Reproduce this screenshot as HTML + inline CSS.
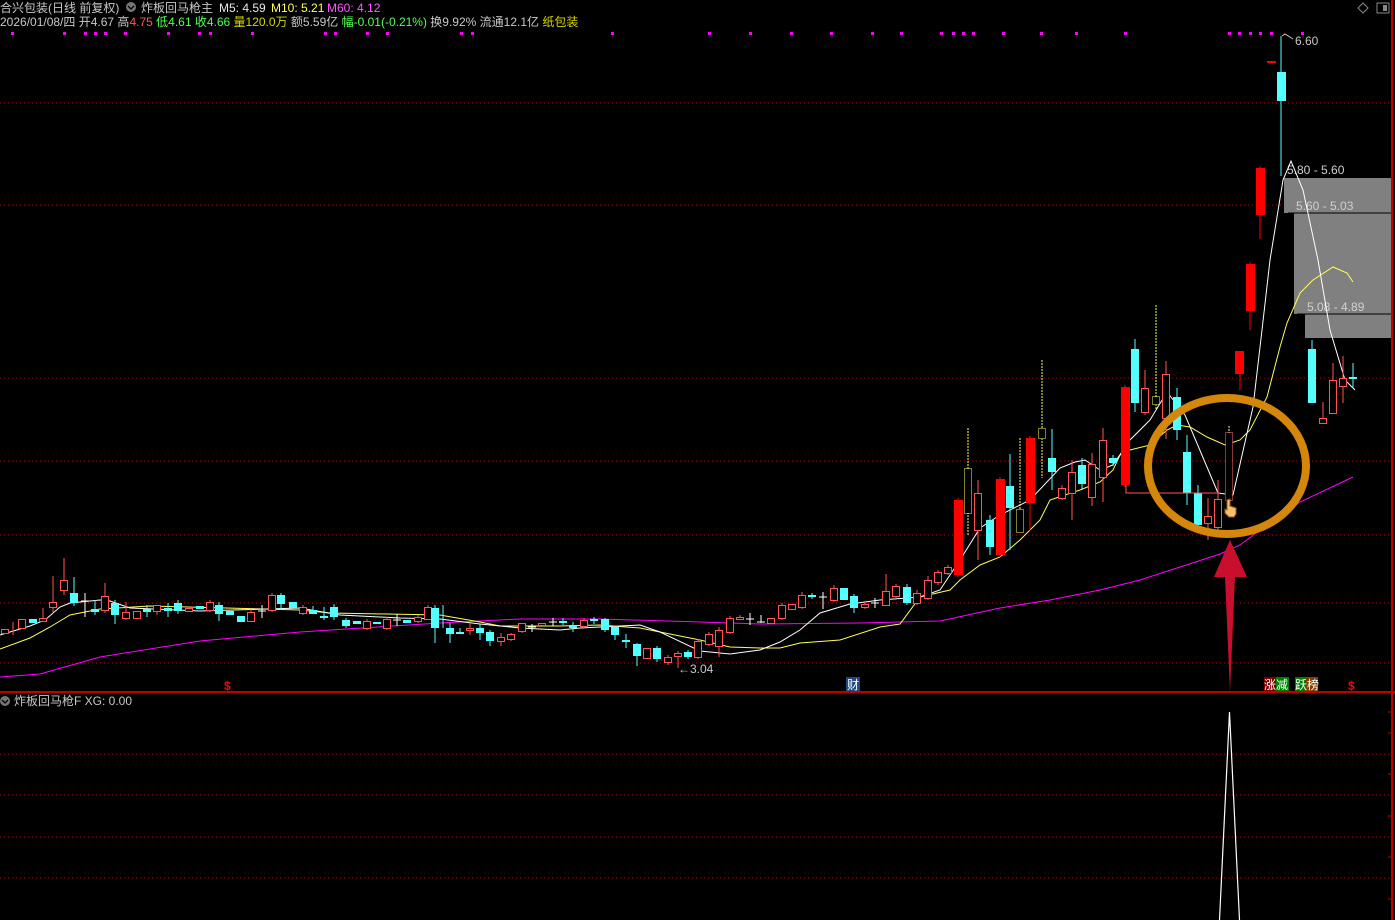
<!DOCTYPE html>
<html><head><meta charset="utf-8">
<style>
html,body{margin:0;padding:0;background:#000;width:1395px;height:920px;overflow:hidden}
svg{display:block}
text{font-family:"Liberation Sans","Noto Sans CJK SC",sans-serif;font-size:12px}
.r{fill:#000;stroke:#ff5454;stroke-width:1}
.R{fill:#ff0000}
.c{fill:#54ffff}
.y{fill:#000;stroke:#ffff54;stroke-width:1;stroke-dasharray:1 1}
.g{stroke:#c00000;stroke-width:1;stroke-dasharray:1 3}
</style></head><body>
<svg width="1395" height="920" viewBox="0 0 1395 920" xmlns="http://www.w3.org/2000/svg">
<!-- header -->
<text x="0" y="12" fill="#c8c8c8">合兴包装(日线 前复权)</text>
<circle cx="131" cy="7" r="5" fill="#777"/><path d="M128 6 L131 9 L134 6" stroke="#000" fill="none" stroke-width="1.3"/>
<text x="141" y="12" fill="#c8c8c8">炸板回马枪主</text>
<text x="219" y="12" fill="#e8e8e8">M5: 4.59</text>
<text x="271" y="12" fill="#ffff54">M10: 5.21</text>
<text x="327" y="12" fill="#ff54ff">M60: 4.12</text>
<text x="0" y="26" fill="#c8c8c8">2026/01/08/四 开4.67 <tspan fill="#c8c8c8">高</tspan><tspan fill="#ff5454">4.75</tspan> <tspan fill="#54ff54">低4.61 收4.66</tspan> <tspan fill="#d8d800">量120.0万</tspan> 额5.59亿 <tspan fill="#54ff54">幅-0.01(-0.21%)</tspan> 换9.92% 流通12.1亿 <tspan fill="#d8d800">纸包装</tspan></text>
<path d="M1363 3 L1368 8 L1363 13 L1358 8 Z" stroke="#888" fill="none"/>
<rect x="1377" y="3" width="12" height="10" fill="none" stroke="#888"/><rect x="1383" y="5" width="4" height="6" fill="#888"/>
<!-- pink dots -->
<g fill="#ff00ff">
<rect x="11" y="32" width="3" height="3"/><rect x="63" y="32" width="3" height="3"/><rect x="84" y="32" width="3" height="3"/><rect x="94" y="32" width="3" height="3"/><rect x="104" y="32" width="3" height="3"/><rect x="124" y="32" width="3" height="3"/><rect x="167" y="32" width="3" height="3"/><rect x="198" y="32" width="3" height="3"/><rect x="209" y="32" width="3" height="3"/><rect x="251" y="32" width="3" height="3"/><rect x="324" y="32" width="3" height="3"/><rect x="334" y="32" width="3" height="3"/><rect x="366" y="32" width="3" height="3"/><rect x="386" y="32" width="3" height="3"/><rect x="460" y="32" width="3" height="3"/><rect x="471" y="32" width="3" height="3"/><rect x="611" y="32" width="3" height="3"/><rect x="708" y="32" width="3" height="3"/><rect x="749" y="32" width="3" height="3"/><rect x="790" y="32" width="3" height="3"/><rect x="830" y="32" width="3" height="3"/><rect x="871" y="32" width="3" height="3"/><rect x="900" y="32" width="3" height="3"/><rect x="940" y="32" width="3" height="3"/><rect x="952" y="32" width="3" height="3"/><rect x="962" y="32" width="3" height="3"/><rect x="972" y="32" width="3" height="3"/><rect x="1002" y="32" width="3" height="3"/><rect x="1040" y="32" width="3" height="3"/><rect x="1075" y="32" width="3" height="3"/><rect x="1124" y="32" width="3" height="3"/><rect x="1228" y="32" width="3" height="3"/><rect x="1238" y="32" width="3" height="3"/><rect x="1249" y="32" width="3" height="3"/><rect x="1259" y="32" width="3" height="3"/><rect x="1270" y="32" width="3" height="3"/><rect x="1301" y="32" width="3" height="3"/>
</g>
<!-- grid -->
<g class="g">
<line x1="0" y1="103" x2="1390" y2="103"/><line x1="0" y1="205" x2="1390" y2="205"/><line x1="0" y1="378" x2="1390" y2="378"/><line x1="0" y1="461" x2="1390" y2="461"/><line x1="0" y1="535" x2="1390" y2="535"/><line x1="0" y1="603" x2="1390" y2="603"/><line x1="0" y1="663" x2="1390" y2="663"/>
<line x1="0" y1="754" x2="1390" y2="754"/><line x1="0" y1="795" x2="1390" y2="795"/><line x1="0" y1="837" x2="1390" y2="837"/><line x1="0" y1="878" x2="1390" y2="878"/>
</g>
<rect x="1391" y="0" width="2" height="920" fill="#c00000"/>
<rect x="0" y="691" width="1395" height="2" fill="#c00000"/>
<!-- gray boxes -->
<rect x="1284" y="178" width="107" height="35" fill="#808080"/>
<rect x="1294" y="213" width="97" height="101" fill="#808080"/>
<rect x="1305" y="314" width="86" height="24" fill="#808080"/>
<line x1="1288" y1="213" x2="1391" y2="213" stroke="#000"/>
<line x1="1297" y1="314" x2="1391" y2="314" stroke="#000"/>
<text x="1287" y="174" fill="#d0d0d0">5.80 - 5.60</text>
<text x="1296" y="210" fill="#d0d0d0">5.60 - 5.03</text>
<text x="1307" y="311" fill="#d0d0d0">5.08 - 4.89</text>
<!-- MA lines -->
<polyline fill="none" stroke="#ff00ff" stroke-width="1" points="0,677 40,674 100,657 200,641 300,632 440,623 520,619 600,619 700,622 760,624 860,623 940,621 1000,608 1050,600 1100,590 1140,580 1180,567 1220,554 1240,545 1260,530 1300,502 1353,477"/>
<polyline fill="none" stroke="#ffff54" stroke-width="1" points="0,649 30,638 50,627 70,615 100,609 150,606 300,610 330,613 440,615 480,622 500,626 560,626 600,625 640,628 700,640 730,647 760,648 780,648 800,643 840,640 880,627 900,624 920,597 950,590 960,580 980,565 1000,557 1020,540 1040,520 1050,500 1080,490 1100,482 1113,470 1120,455 1130,450 1150,445 1167,430 1177,425 1190,427 1207,437 1225,445 1240,440 1250,430 1267,397 1280,347 1287,323 1300,293 1313,280 1333,267 1347,273 1353,282"/>
<polyline fill="none" stroke="#ffffff" stroke-width="1" points="0,635 30,626 45,620 60,607 70,603 100,600 110,601 130,608 200,611 300,608 340,615 400,618 440,619 480,624 520,628 560,630 580,628 620,626 640,625 660,632 700,651 730,654 760,650 780,642 800,630 820,613 850,604 880,600 920,597 940,590 960,560 980,528 1000,515 1030,500 1060,468 1075,462 1085,460 1100,470 1113,465 1130,440 1150,420 1167,392 1185,415 1218,493 1233,495 1253,407 1262,330 1270,260 1283,180 1291,161 1303,190 1318,260 1330,330 1345,380 1355,390"/>
<!-- wicks -->
<path stroke="#ff5454" stroke-width="1" fill="none" d="M13 622V635M43 608V622M53 576V612M64 558V595M105 583V613M126 602V620M157 605V615M210 600V612M251 609V622M272 593V612M303 605V615M367 619V630M387 617V630M418 615V623M428 605V620M470 623V635M501 633V646M511 633V641M522 623V633M584 618V628M668 655V665M678 651V668M698 639V659M709 632V646M719 627V657M730 616V634M740 615V620M782 603V620M802 592V609M834 585V602M865 602V609M886 574V606M896 584V598M917 590V605M928 576V600M938 570V585M948 565V575M978 480V560M1062 485V500M1072 460V520M1092 453V506M1103 428V502M1145 370V415M1166 361V439M1208 498V540M1218 480V530M1323 402V424M1333 363V414M1343 356V403"/>
<path stroke="#ff0000" stroke-width="1" fill="none" d="M958 498V577M1000 477V557M1030 436V531M1125 385V487M1240 351V390M1250 262V330M1260 166V239"/>
<path stroke="#54ffff" stroke-width="1" fill="none" d="M74 577V606M95 600V615M115 600V624M147 605V617M168 603V617M178 600V614M219 602V621M281 593V610M313 606V614M324 607V620M334 604V620M346 618V628M435 605V643M443 605V628M450 623V643M460 628V634M480 624V640M490 630V646M563 618V625M573 622V632M594 617V624M605 618V632M615 627V640M626 634V648M637 643V666M657 646V662M688 650V659M812 593V599M854 594V613M907 584V605M990 515V555M1010 454V550M1052 429V490M1082 458V490M1113 455V466M1135 339V412M1177 388V440M1187 435V505M1198 485V527M1281 36V176M1312 340V403M1353 363V388"/>
<path stroke="#ffff54" stroke-width="1" fill="none" stroke-dasharray="2 1" d="M968 428V535M1020 438V532M1042 360V478M1156 305V410M1229 426V505"/>
<path stroke="#ffffff" stroke-width="1" fill="none" d="M81 601H89M85 593V617M258 611H266M262 605V618M393 620H401M397 614V626M528 627H536M532 624V632M549 622H557M553 618V626M746 619H754M750 613V625M757 622H765M761 615V623M819 597H827M823 592V609M871 603H879M875 598V608"/>
<!-- red hollow -->
<g class="r">
<rect x="1.5" y="629.5" width="7" height="4"/><rect x="18.5" y="619.5" width="7" height="9"/><rect x="39.5" y="618.5" width="7" height="3"/><rect x="49.5" y="602.5" width="7" height="5"/><rect x="60.5" y="580.5" width="7" height="10"/><rect x="101.5" y="596.5" width="7" height="14"/><rect x="122.5" y="612.5" width="7" height="6"/><rect x="133.5" y="611.5" width="7" height="7"/><rect x="153.5" y="605.5" width="7" height="6"/><rect x="185.5" y="608.5" width="7" height="3"/><rect x="206.5" y="602.5" width="7" height="8"/><rect x="247.5" y="612.5" width="7" height="9"/><rect x="268.5" y="595.5" width="7" height="15"/><rect x="299.5" y="607.5" width="7" height="6"/><rect x="363.5" y="621.5" width="7" height="7"/><rect x="383.5" y="619.5" width="7" height="9"/><rect x="414.5" y="617.5" width="7" height="4"/><rect x="424.5" y="607.5" width="7" height="12"/><rect x="466.5" y="628.5" width="7" height="2"/><rect x="497.5" y="637.5" width="7" height="4"/><rect x="507.5" y="634.5" width="7" height="5"/><rect x="518.5" y="623.5" width="7" height="8"/><rect x="538.5" y="623.5" width="7" height="2"/><rect x="580.5" y="620.5" width="7" height="6"/><rect x="643.5" y="648.5" width="7" height="10"/><rect x="664.5" y="657.5" width="7" height="5"/><rect x="674.5" y="653.5" width="7" height="3"/><rect x="694.5" y="641.5" width="7" height="16"/><rect x="705.5" y="634.5" width="7" height="10"/><rect x="715.5" y="630.5" width="7" height="16"/><rect x="726.5" y="618.5" width="7" height="14"/><rect x="736.5" y="617.5" width="7" height="2"/><rect x="767.5" y="618.5" width="7" height="5"/><rect x="778.5" y="605.5" width="7" height="13"/><rect x="788.5" y="604.5" width="7" height="5"/><rect x="798.5" y="595.5" width="7" height="12"/><rect x="830.5" y="588.5" width="7" height="12"/><rect x="861.5" y="604.5" width="7" height="3"/><rect x="882.5" y="591.5" width="7" height="14"/><rect x="892.5" y="586.5" width="7" height="10"/><rect x="913.5" y="593.5" width="7" height="10"/><rect x="924.5" y="580.5" width="7" height="18"/><rect x="934.5" y="572.5" width="7" height="10"/><rect x="944.5" y="567.5" width="7" height="6"/><rect x="974.5" y="493.5" width="7" height="37"/><rect x="1058.5" y="488.5" width="7" height="10"/><rect x="1068.5" y="472.5" width="7" height="21"/><rect x="1088.5" y="464.5" width="7" height="33"/><rect x="1099.5" y="440.5" width="7" height="37"/><rect x="1141.5" y="388.5" width="7" height="24"/><rect x="1162.5" y="374.5" width="7" height="44"/><rect x="1204.5" y="516.5" width="7" height="7"/><rect x="1214.5" y="499.5" width="7" height="28"/><rect x="1319.5" y="418.5" width="7" height="5"/><rect x="1329.5" y="380.5" width="7" height="33"/><rect x="1339.5" y="378.5" width="7" height="8"/>
</g>
<g class="y">
<rect x="964.5" y="468.5" width="7" height="45"/><rect x="1016.5" y="509.5" width="7" height="23"/><rect x="1038.5" y="428.5" width="7" height="10"/><rect x="1152.5" y="396.5" width="7" height="8"/><rect x="1225.5" y="432.5" width="7" height="68" style="stroke:#ff7070"/>
</g>
<g class="R">
<rect x="954" y="500" width="9" height="75"/><rect x="996" y="479" width="9" height="76"/><rect x="1026" y="438" width="9" height="65"/><rect x="1121" y="387" width="9" height="98"/><rect x="1235" y="351" width="9" height="23"/><rect x="1246" y="264" width="9" height="47"/><rect x="1256" y="168" width="9" height="47"/><rect x="1267" y="61" width="9" height="2"/>
</g>
<g class="c">
<rect x="29" y="619" width="8" height="4"/><rect x="70" y="593" width="8" height="10"/><rect x="91" y="609" width="8" height="3"/><rect x="111" y="603" width="8" height="12"/><rect x="143" y="609" width="8" height="3"/><rect x="164" y="608" width="8" height="3"/><rect x="174" y="603" width="8" height="8"/><rect x="196" y="606" width="8" height="3"/><rect x="215" y="605" width="8" height="9"/><rect x="226" y="611" width="8" height="4"/><rect x="237" y="616" width="8" height="6"/><rect x="277" y="595" width="8" height="9"/><rect x="289" y="602" width="8" height="6"/><rect x="309" y="610" width="8" height="4"/><rect x="320" y="616" width="8" height="2"/><rect x="330" y="607" width="8" height="10"/><rect x="342" y="620" width="8" height="6"/><rect x="353" y="621" width="8" height="3"/><rect x="373" y="622" width="8" height="2"/><rect x="403" y="620" width="8" height="3"/><rect x="431" y="608" width="8" height="20"/><rect x="446" y="628" width="8" height="6"/><rect x="456" y="632" width="8" height="2"/><rect x="476" y="628" width="8" height="5"/><rect x="486" y="632" width="8" height="9"/><rect x="559" y="621" width="8" height="2"/><rect x="569" y="625" width="8" height="3"/><rect x="590" y="619" width="8" height="2"/><rect x="601" y="619" width="8" height="11"/><rect x="611" y="627" width="8" height="8"/><rect x="622" y="640" width="8" height="2"/><rect x="633" y="644" width="8" height="12"/><rect x="653" y="648" width="8" height="11"/><rect x="684" y="652" width="8" height="5"/><rect x="808" y="595" width="8" height="2"/><rect x="840" y="588" width="8" height="12"/><rect x="850" y="596" width="8" height="12"/><rect x="903" y="587" width="8" height="16"/><rect x="986" y="520" width="8" height="27"/><rect x="1006" y="486" width="8" height="22"/><rect x="1048" y="458" width="8" height="14"/><rect x="1078" y="465" width="8" height="19"/><rect x="1109" y="458" width="8" height="5"/><rect x="1131" y="349" width="8" height="54"/><rect x="1173" y="397" width="8" height="33"/><rect x="1183" y="452" width="8" height="41"/><rect x="1194" y="493" width="8" height="32"/><rect x="1277" y="72" width="9" height="29"/><rect x="1308" y="349" width="8" height="54"/><rect x="1349" y="377" width="8" height="2"/>
</g>
<!-- red support line -->
<path d="M1126 485V493H1220" stroke="#ff5454" fill="none"/>
<!-- labels -->
<text x="678" y="673" fill="#c8c8c8">←3.04</text>
<path d="M1282 36 L1285 34 L1293 39" stroke="#c8c8c8" fill="none"/>
<text x="1295" y="45" fill="#c8c8c8">6.60</text>
<text x="224" y="690" fill="#ff0000" font-weight="bold">$</text>
<text x="1348" y="690" fill="#ff0000" font-weight="bold">$</text>
<rect x="846" y="677" width="14" height="14" fill="#1e4a80"/><text x="847" y="689" fill="#fff">财</text>
<rect x="1264" y="677" width="12" height="14" fill="#800000"/><rect x="1276" y="677" width="13" height="14" fill="#008000"/><text x="1264" y="689" fill="#fff">涨减</text>
<rect x="1295" y="677" width="11" height="14" fill="#008000"/><rect x="1306" y="677" width="12" height="14" fill="#804000"/><text x="1295" y="689" fill="#fff">跃榜</text>
<!-- orange ellipse -->
<ellipse cx="1227" cy="466" rx="79" ry="68" fill="none" stroke="#d4870a" stroke-width="8"/>
<!-- hand cursor -->
<path d="M1227 500 v10 l-2 -1 v4 l4 4 h5 l2 -3 v-6 l-3 -1 l-3 -1 v-7 z" fill="#f4c070" stroke="#a05a10" stroke-width="1"/>
<!-- big arrow -->
<path d="M1230 540 L1247 577 L1235 577 L1230 692 L1225 577 L1214 577 Z" fill="#c8102e"/>
<!-- lower panel -->
<circle cx="5" cy="701" r="5" fill="#777"/><path d="M2 700 L5 703 L8 700" stroke="#000" fill="none" stroke-width="1.3"/>
<text x="14" y="705" fill="#c8c8c8">炸板回马枪F  XG: 0.00</text>
<path d="M1219.5 920 L1229.5 712 L1239.5 920" stroke="#fff" fill="none" stroke-width="1.2"/>
<g stroke="#c00000"><line x1="1388" y1="712" x2="1391" y2="712"/><line x1="1388" y1="733" x2="1391" y2="733"/><line x1="1388" y1="774" x2="1391" y2="774"/><line x1="1388" y1="816" x2="1391" y2="816"/><line x1="1388" y1="857" x2="1391" y2="857"/><line x1="1388" y1="899" x2="1391" y2="899"/></g>
</svg>
</body></html>
